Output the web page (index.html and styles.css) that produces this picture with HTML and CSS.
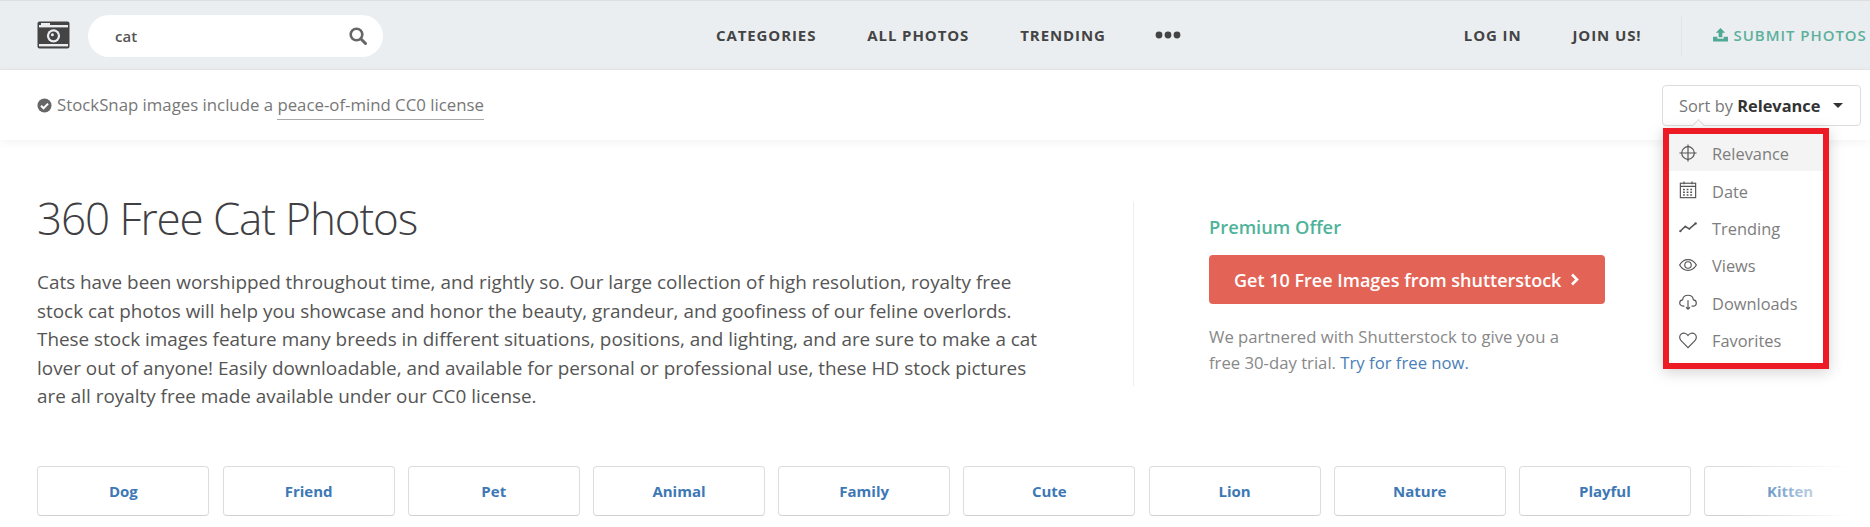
FILE: index.html
```html
<!DOCTYPE html>
<html lang="en">
<head>
<meta charset="utf-8">
<title>360 Free Cat Photos</title>
<link rel="stylesheet" href="styles.css">
</head>
<body>
<header class="topbar">
  <svg class="logo" viewBox="0 0 33 28"><rect x="0.5" y="0.5" width="32" height="27" rx="2" fill="#444"/><rect x="2" y="4" width="29" height="2.4" fill="#ebeef1"/><rect x="4" y="2" width="9" height="2" fill="#ebeef1"/><rect x="2" y="23" width="29" height="2.4" fill="#ebeef1"/><circle cx="16.5" cy="14.8" r="6.6" fill="#ebeef1"/><circle cx="16.5" cy="14.8" r="4.4" fill="#444"/><circle cx="15.4" cy="13.7" r="1.5" fill="#ebeef1"/></svg>
  <div class="search">
    <span class="search-text">cat</span>
    <svg class="search-icon" viewBox="0 0 18 18"><circle cx="7.5" cy="7.5" r="5.8" fill="none" stroke="#666" stroke-width="2.6"/><path d="M11.8 11.8 16.5 16.5" stroke="#666" stroke-width="3" stroke-linecap="round"/></svg>
  </div>
  <nav class="nav-main">
    <a>CATEGORIES</a><a>ALL PHOTOS</a><a>TRENDING</a>
    <svg class="dots" viewBox="0 0 26 8"><circle cx="4" cy="4" r="3.4" fill="#444"/><circle cx="13" cy="4" r="3.4" fill="#444"/><circle cx="22" cy="4" r="3.4" fill="#444"/></svg>
  </nav>
  <nav class="nav-user">
    <a>LOG IN</a><a>JOIN US!</a>
  </nav>
  <div class="submit">
    <svg class="upload" viewBox="0 0 16 15"><path d="M8 0 13 5.2H10V10H6V5.2H3Z" fill="#4fa894"/><path d="M0 9.5H4.6V11.4H11.4V9.5H16V14.5H0Z" fill="#4fa894"/></svg>
    <span>SUBMIT PHOTOS</span>
  </div>
</header>

<div class="subbar">
  <p class="license">
    <svg class="check" viewBox="0 0 16 16"><circle cx="8" cy="8" r="7.5" fill="#666"/><path d="M4.3 8.2 7 10.9 11.8 6" fill="none" stroke="#fff" stroke-width="2.2"/></svg>StockSnap images include a <a class="license-link">peace-of-mind CC0 license</a>
  </p>
  <div class="sort">
    <span>Sort by <b>Relevance</b></span>
    <i class="caret"></i>
  </div>
</div>

<ul class="menu">
  <li class="menu-item active"><svg class="mi" viewBox="0 0 20 20"><circle cx="10" cy="10" r="7" /><path d="M10 0.5V19.5M0.5 10H19.5"/></svg>Relevance</li>
  <li class="menu-item"><svg class="mi" viewBox="0 0 20 20"><rect x="1.5" y="2.5" width="17" height="16"/><path d="M1.5 6H18.5M5.5 0.5V3.5M14.5 0.5V3.5"/><path class="dash" d="M4.5 9.5H15.5M4.5 12.5H15.5M4.5 15.5H15.5"/></svg>Date</li>
  <li class="menu-item"><svg class="mi" viewBox="0 0 20 20"><path class="bold" d="M1.5 14.5 7 9.5 11.5 12 18.5 6"/><circle class="fill" cx="1.5" cy="14.5" r="1.3"/><circle class="fill" cx="7" cy="9.5" r="1"/><circle class="fill" cx="11.5" cy="12" r="1"/><circle class="fill" cx="18.5" cy="6" r="1.3"/></svg>Trending</li>
  <li class="menu-item"><svg class="mi" viewBox="0 0 20 20"><path d="M0.7 10C3 6 6.3 4 10 4S17 6 19.3 10C17 14 13.7 16 10 16S3 14 0.7 10Z"/><circle cx="10" cy="10" r="3.6"/></svg>Views</li>
  <li class="menu-item"><svg class="mi" viewBox="0 0 20 20"><path d="M6 14.5H4.5C2.5 14.5 0.8 13 0.8 11S2.2 7.8 4 7.6C4.4 4.4 6.8 2.5 10 2.5S15.6 4.4 16 7.6C17.8 7.8 19.2 9 19.2 11S17.5 14.5 15.5 14.5H14"/><path d="M10 8V18M7.8 15.8 10 18 12.2 15.8"/></svg>Downloads</li>
  <li class="menu-item"><svg class="mi" viewBox="0 0 20 20"><path d="M10 18.5 2.3 10.6C0 8.2 0.4 4.8 2.6 3.2 5 1.5 8.3 2.3 10 5 11.7 2.3 15 1.5 17.4 3.2 19.6 4.8 20 8.2 17.7 10.6Z"/></svg>Favorites</li>
</ul>

<main class="intro">
  <section class="intro-copy">
    <h1>360 Free Cat Photos</h1>
    <p>Cats have been worshipped throughout time, and rightly so. Our large collection of high resolution, royalty free stock cat photos will help you showcase and honor the beauty, grandeur, and goofiness of our feline overlords. These stock images feature many breeds in different situations, positions, and lighting, and are sure to make a cat lover out of anyone! Easily downloadable, and available for personal or professional use, these HD stock pictures are all royalty free made available under our CC0 license.</p>
  </section>
  <aside class="offer">
    <h2>Premium Offer</h2>
    <a class="offer-btn">Get 10 Free Images from shutterstock
      <svg class="chev" viewBox="0 0 9 13"><path d="M2 1.5 7 6.5 2 11.5" fill="none" stroke="#fff" stroke-width="2.6"/></svg>
    </a>
    <p>We partnered with Shutterstock to give you a free 30-day trial. <a class="offer-link">Try for free now.</a></p>
  </aside>
</main>

<div class="tags">
  <a class="tag">Dog</a><a class="tag">Friend</a><a class="tag">Pet</a><a class="tag">Animal</a><a class="tag">Family</a><a class="tag">Cute</a><a class="tag">Lion</a><a class="tag">Nature</a><a class="tag">Playful</a><a class="tag">Kitten</a>
  <div class="tags-fade"></div>
</div>
</body>
</html>
```
FILE: styles.css
```css
* { box-sizing: border-box; }
html, body { margin: 0; padding: 0; }
body {
  width: 1870px;
  height: 527px;
  overflow: hidden;
  background: #fff;
  font-family: "Open Sans", "Liberation Sans", sans-serif;
  color: #555;
  position: relative;
}
p, h1, h2, ul { margin: 0; padding: 0; }

.topbar {
  display: flex;
  align-items: center;
  height: 70px;
  padding-left: 37px;
  background: #ebeef1;
  border-top: 1px solid #dedede;
  border-bottom: 1px solid #e4e6e8;
}
.logo { width: 33px; height: 28px; flex: none; }
.search {
  display: flex;
  align-items: center;
  justify-content: space-between;
  width: 295px;
  height: 42px;
  margin-left: 18px;
  margin-top: 2px;
  padding: 0 16px 0 27px;
  background: #fff;
  border-radius: 21px;
}
.search-text { font-size: 15px; font-weight: 600; color: #555; }
.search-icon { width: 18px; height: 18px; }
.nav-main, .nav-user {
  display: flex;
  align-items: center;
  gap: 51px;
  font-size: 15px;
  font-weight: 700;
  letter-spacing: 0.9px;
  color: #444;
}
.nav-main { margin-left: 333px; }
.dots { width: 26px; height: 8px; margin-left: -2px; }
.nav-user { margin-left: 283px; }
.submit {
  display: flex;
  align-items: center;
  gap: 6px;
  height: 42px;
  margin-left: 39px;
  margin-top: 2px;
  padding: 0 0 2px 31px;
  border-left: 1px solid #e2e4e6;
  font-size: 15px;
  font-weight: 600;
  letter-spacing: 0.95px;
  color: #5cb09c;
  white-space: nowrap;
}
.upload { width: 15px; height: 14px; flex: none; }

.subbar {
  display: flex;
  align-items: center;
  justify-content: space-between;
  height: 70px;
  padding: 0 9px 0 37px;
  background: #fff;
  box-shadow: 0 2px 10px rgba(0, 0, 0, 0.05);
}
.license { font-size: 16.8px; line-height: 24px; color: #777; }
.check { width: 15px; height: 15px; margin-right: 5px; vertical-align: -2px; }
.license-link { border-bottom: 1px solid #aaa; padding-bottom: 3px; }
.sort {
  display: flex;
  align-items: center;
  justify-content: space-between;
  position: relative;
  width: 199px;
  height: 41px;
  padding: 0 17px 0 16px;
  border: 1px solid #ddd;
  border-radius: 4px;
  font-size: 16.4px;
  color: #777;
  white-space: nowrap;
}
.sort b { color: #333; font-weight: 700; }
.caret {
  width: 0;
  height: 0;
  border-left: 5px solid transparent;
  border-right: 5px solid transparent;
  border-top: 5px solid #333;
}
.sort::after {
  content: "";
  position: absolute;
  left: 31px;
  bottom: -5px;
  width: 8px;
  height: 8px;
  background: #fff;
  border-left: 1px solid #ddd;
  border-top: 1px solid #ddd;
  transform: rotate(45deg);
}

.menu {
  position: absolute;
  left: 1663px;
  top: 128px;
  width: 166px;
  height: 241px;
  padding: 0;
  list-style: none;
  background: #fff;
  border: 6px solid #ed1c24;
  box-shadow: 0 3px 14px rgba(0, 0, 0, 0.18);
  z-index: 5;
}
.menu-item {
  display: flex;
  align-items: center;
  height: 37.4px;
  padding: 2px 0 0 10px;
  font-size: 16.4px;
  color: #7d7d7d;
}
.menu-item.active { background: #f4f4f4; }
.mi {
  width: 18px;
  height: 18px;
  margin: -2px 15px 0 0;
  flex: none;
  fill: none;
  stroke: #555;
  stroke-width: 1.3;
}
.mi .fill { fill: #555; stroke: none; }
.mi .bold { stroke-width: 1.7; }
.mi .dash { stroke-dasharray: 2 2; stroke-width: 1.6; }

.intro { display: flex; align-items: flex-start; padding-left: 37px; }
.intro-copy { width: 1010px; padding-top: 48px; flex: none; }
h1 { font-size: 44px; font-weight: 300; line-height: 60px; letter-spacing: -1.1px; color: #3f3f44; }
.intro-copy p { margin-top: 20px; font-size: 18.9px; line-height: 28.5px; color: #555; }
.offer {
  width: 490px;
  height: 184px;
  margin-top: 62px;
  margin-left: 86px;
  padding: 12px 0 0 75px;
  border-left: 1px solid #eee;
}
h2 { font-size: 18.3px; font-weight: 600; line-height: 26px; color: #4fb39a; }
.offer-btn {
  display: flex;
  align-items: center;
  gap: 9px;
  width: 396px;
  height: 49px;
  margin-top: 15px;
  padding-left: 25px;
  background: #e36456;
  border-radius: 4px;
  color: #fff;
  font-size: 18px;
  font-weight: 600;
  white-space: nowrap;
}
.chev { width: 9px; height: 13px; }
.offer p { margin-top: 20px; width: 372px; font-size: 16.7px; line-height: 25.5px; color: #888; }
.offer-link { color: #4a80b8; }

.tags {
  position: absolute;
  left: 37.4px;
  top: 466px;
  right: 0;
  display: flex;
  gap: 13.2px;
  overflow: hidden;
}
.tag {
  display: flex;
  align-items: center;
  justify-content: center;
  flex: none;
  width: 172px;
  height: 50px;
  border: 1px solid #ddd;
  border-bottom-color: #d2d2d2;
  border-radius: 4px;
  font-size: 15px;
  font-weight: 700;
  color: #3d78b5;
}
.tags-fade {
  position: absolute;
  right: 0;
  top: 0;
  bottom: 0;
  width: 130px;
  background: linear-gradient(to right, rgba(255, 255, 255, 0), #fff 85%);
}
```
